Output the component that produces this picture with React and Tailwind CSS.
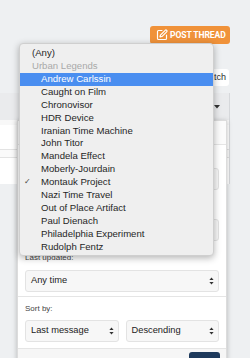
import React from 'react';
import { SquarePen } from 'lucide-react';

const prefixes = [
  'Andrew Carlssin',
  'Caught on Film',
  'Chronovisor',
  'HDR Device',
  'Iranian Time Machine',
  'John Titor',
  'Mandela Effect',
  'Moberly-Jourdain',
  'Montauk Project',
  'Nazi Time Travel',
  'Out of Place Artifact',
  'Paul Dienach',
  'Philadelphia Experiment',
  'Rudolph Fentz',
];

const UpDown = () => (
  <svg width="5" height="8" viewBox="0 0 5 8" className="shrink-0" aria-hidden="true">
    <path d="M2.5 0.5 L4.6 3 L0.4 3 Z" fill="#333" />
    <path d="M2.5 7.5 L4.6 5 L0.4 5 Z" fill="#333" />
  </svg>
);

// Fake select box (closed state)
const SelectBox = ({ value, className = '' }) => (
  <div
    className={`flex h-[22px] items-center justify-between rounded-[3px] border border-[#e3e3e3] bg-[#f7f7f7] pl-[5px] pr-[4px] text-[9.3px] text-[#222] ${className}`}
  >
    <span className="whitespace-nowrap">{value}</span>
    <UpDown />
  </div>
);

const Field = ({ label, children }) => (
  <div className="flex flex-col">
    <div className="h-[12px] text-[8px] leading-[12px] text-[#444]">{label}</div>
    <div className="mt-[6px]">{children}</div>
  </div>
);

export default function App() {
  return (
    <div
      className="relative h-[358px] w-[250px] overflow-hidden bg-[#eef0f2]"
      style={{ fontFamily: '"Liberation Sans", Arial, sans-serif' }}
    >
      {/* Post thread */}
      <div className="flex justify-end pr-[20px] pt-[26px]">
        <button className="flex h-[18px] w-[80px] items-center gap-[2px] rounded-[3px] bg-[#f0923a] pl-[6px] text-white">
          <SquarePen size={12} strokeWidth={2.3} aria-hidden="true" />
          <span
            className="whitespace-nowrap text-[8.6px] font-bold tracking-[-0.1px]"
            style={{ fontFamily: 'Roboto, "Liberation Sans", sans-serif' }}
          >
            POST THREAD
          </span>
        </button>
      </div>

      {/* Block outer: watch */}
      <div className="mt-[25px] flex justify-end pr-[21px]">
        <button className="flex h-[17px] items-center rounded-[3px] bg-white pl-[4px] pr-[3px] text-[9px] font-medium text-[#2c2c2c]">
          Watch
        </button>
      </div>

      {/* Thread list block behind the menu */}
      <div className="mt-[7px] w-[230px] border-r border-[#d6d8db] bg-white">
        <div className="flex h-[27px] items-center justify-end bg-[#eaebed] pr-[9px] text-[9px] text-[#333]">
          <span>Filters</span>
          <svg width="6" height="4" viewBox="0 0 6 4" className="ml-[2px]" aria-hidden="true">
            <path d="M0 0 L6 0 L3 3.5 Z" fill="#333" />
          </svg>
        </div>
        <div className="h-[30px] border-b border-[#e3e3e3] border-t-[5px] border-t-[#f8f8f8]" />
        <div className="h-[8px] border-b border-[#e3e3e3] bg-[#fafafa]" />
        <div className="h-[26px]" />
      </div>

      {/* Filter menu */}
      <div className="absolute left-[17px] top-[120px] w-[210px] border border-[#dcdcdc] bg-white shadow-[0_1px_5px_rgba(0,0,0,0.25)]">
        <div className="flex h-[24px] items-center border-b border-[#e5e5e5] bg-[#fbfbfb] px-[7px] text-[9px] font-bold text-[#333]">
          Show only:
        </div>
        <div className="flex flex-col gap-[11px] px-[7px] pb-[4px] pt-[5px]">
          <Field label="Prefix:">
            <SelectBox value="Montauk Project" />
          </Field>
          <Field label="Started by:">
            <div className="h-[22px] rounded-[3px] border border-[#e3e3e3] bg-[#f7f7f7]" />
          </Field>
          <Field label="Last updated:">
            <SelectBox value="Any time" />
          </Field>
        </div>
        <div className="border-t border-[#e5e5e5] px-[7px] pb-[6px] pt-[6px]">
          <div className="h-[12px] text-[8px] leading-[12px] text-[#444]">Sort by:</div>
          <div className="mt-[5px] grid grid-cols-2 gap-[7px]">
            <SelectBox value="Last message" />
            <SelectBox value="Descending" />
          </div>
        </div>
        <div className="flex justify-end border-t border-[#e5e5e5] bg-[#f6f6f6] px-[6px] pt-[3px]">
          <button className="h-[24px] w-[31px] rounded-[3px] bg-[#1e3a5c] text-[9px] text-white">
            Filter
          </button>
        </div>
      </div>

      {/* Open native select list */}
      <div className="absolute left-[19px] top-[43px] w-[195px] rounded-[4px] border border-[#cfcfcf] bg-[#efefef] pb-[2px] pt-[3px] text-[9.6px] text-[#262626] shadow-[0_2px_7px_rgba(0,0,0,0.3)]">
        <div className="flex h-[12.9px] items-center pl-[12px]">(Any)</div>
        <div className="flex h-[12.9px] items-center pl-[12px] text-[#a9a9a9]">Urban Legends</div>
        {prefixes.map((name, i) => (
          <div
            key={name}
            className={`relative flex h-[12.9px] items-center pl-[21px] ${
              i === 0 ? 'bg-[#4a8ef0] text-white' : ''
            }`}
          >
            {name === 'Montauk Project' && (
              <span
                className="absolute left-[4px] text-[8px] text-[#444]"
                style={{ fontFamily: '"DejaVu Sans", sans-serif' }}
              >
                ✓
              </span>
            )}
            {name}
          </div>
        ))}
      </div>
    </div>
  );
}
